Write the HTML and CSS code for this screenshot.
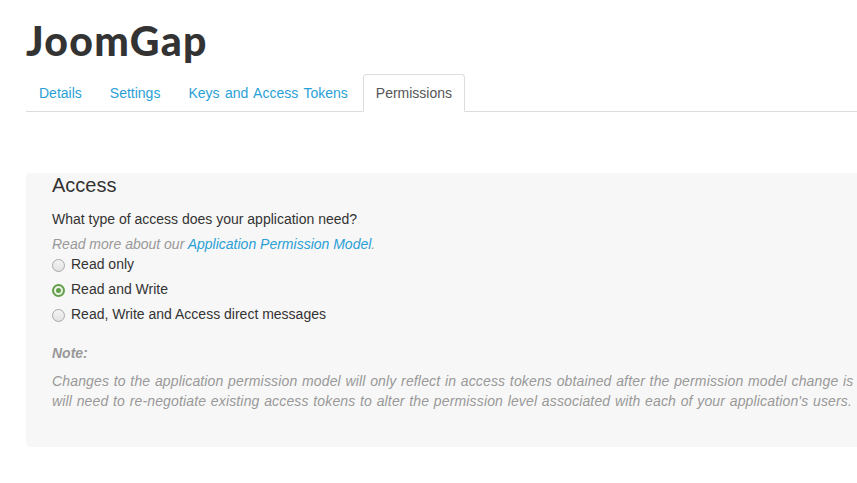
FILE: index.html
```html
<!DOCTYPE html>
<html>
<head>
<meta charset="utf-8">
<link rel="stylesheet" href="styles.css">
</head>
<body>
<div class="page">
  <h1 class="title">JoomGap</h1>
  <ul class="tabs">
    <li class="tab"><a class="tab-link">Details</a></li>
    <li class="tab"><a class="tab-link">Settings</a></li>
    <li class="tab"><a class="tab-link">Keys and Access Tokens</a></li>
    <li class="tab"><a class="tab-link active">Permissions</a></li>
  </ul>
  <div class="panel">
    <h2 class="panel-title">Access</h2>
    <p class="question">What type of access does your application need?</p>
    <p class="hint">Read more about our <a class="link">Application Permission Model</a>.</p>
    <div class="options">
      <label class="option"><span class="radio"></span>Read only</label>
      <label class="option"><span class="radio checked"></span>Read and Write</label>
      <label class="option"><span class="radio"></span>Read, Write and Access direct messages</label>
    </div>
    <p class="note-title">Note:</p>
    <p class="note">Changes to the application permission model will only reflect in access tokens obtained after the permission model change is saved. You will need to re-negotiate existing access tokens to alter the permission level associated with each of your application's users.</p>
  </div>
</div>
</body>
</html>
```

FILE: styles.css
```css
html, body {
  margin: 0;
  padding: 0;
  background: #fff;
  overflow: hidden;
}
body {
  font-family: "Liberation Sans", Arial, sans-serif;
  font-size: 14px;
  line-height: 20px;
  color: #333;
}
.page {
  padding: 18px 0 0 26px;
  width: 1100px;
}
.title {
  margin: 0 0 10px 0;
  font-family: Lato, "Liberation Sans", sans-serif;
  font-weight: 900;
  font-size: 41px;
  line-height: 46px;
  color: #333;
  letter-spacing: 1.3px;
}
.tabs {
  list-style: none;
  margin: 0;
  padding: 0;
  display: flex;
  border-bottom: 1px solid #ddd;
  width: 831px;
}
.tab {
  margin-bottom: -1px;
  margin-right: 2px;
}
.tab-link {
  display: block;
  padding: 8px 12px;
  border: 1px solid transparent;
  border-radius: 4px 4px 0 0;
  color: #2a9fd6;
  word-spacing: 1.6px;
  cursor: pointer;
}
.tab-link.active {
  color: #555;
  background: #fff;
  border-color: #ddd;
  border-bottom-color: #fff;
}
.panel {
  margin-top: 61px;
  background: #f7f7f7;
  border-radius: 4px;
  padding: 0 26px 36px 26px;
  width: 1000px;
}
.panel-title {
  margin: 0 0 12px 0;
  font-weight: 400;
  font-size: 20px;
  line-height: 24px;
  color: #333;
}
.question {
  margin: 0 0 5px 0;
}
.hint {
  margin: 0;
  font-style: italic;
  color: #999;
}
.link {
  color: #2a9fd6;
}
.options {
  display: flex;
  flex-direction: column;
  gap: 5px;
  margin-bottom: 19px;
}
.option {
  display: flex;
  align-items: center;
  gap: 6px;
  color: #333;
}
.radio {
  flex: none;
  box-sizing: border-box;
  width: 13px;
  height: 13px;
  border: 1px solid #a8a8a8;
  border-radius: 50%;
  background: linear-gradient(#f4f4f4, #e2e2e2);
  margin-top: 2px;
  position: relative;
}
.radio.checked {
  border: 2px solid #629f48;
  background: #eef3ea;
}
.radio.checked::after {
  content: "";
  position: absolute;
  left: 2px;
  top: 2px;
  width: 5px;
  height: 5px;
  border-radius: 50%;
  background: #629f48;
}
.note-title {
  margin: 0 0 8px 0;
  font-weight: 700;
  font-style: italic;
  color: #999;
}
.note {
  margin: 0;
  font-style: italic;
  color: #999;
  letter-spacing: 0.15px;
  word-spacing: 0.6px;
  width: 896px;
}
```
